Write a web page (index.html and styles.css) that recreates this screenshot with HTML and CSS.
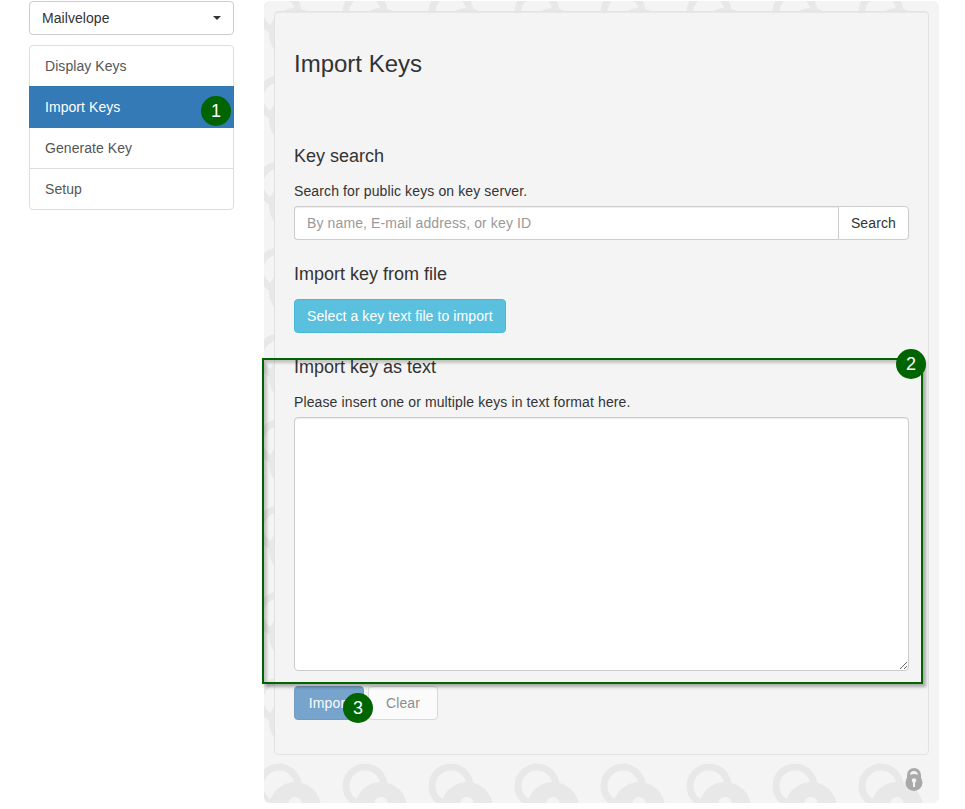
FILE: index.html

```html
<!DOCTYPE html>
<html lang="en">
<head>
    <meta charset="UTF-8">
    <meta name="viewport" content="width=device-width, initial-scale=1.0">
    <title>Import Keys</title>
    <link rel="stylesheet" href="styles.css">
</head>
<body>
    <div class="sidebar">
        <button class="keyring-select">
            <span>Mailvelope</span>
            <span class="caret"></span>
        </button>
        <div class="side-nav">
            <a class="side-item">Display Keys</a>
            <a class="side-item active">Import Keys</a>
            <a class="side-item">Generate Key</a>
            <a class="side-item">Setup</a>
        </div>
    </div>

    <div class="panel">
        <div class="well">
            <h2>Import Keys</h2>

            <h4 class="first">Key search</h4>
            <p>Search for public keys on key server.</p>
            <div class="input-group">
                <input type="text" placeholder="By name, E-mail address, or key ID">
                <button class="btn btn-search">Search</button>
            </div>

            <h4>Import key from file</h4>
            <button class="btn btn-info">Select a key text file to import</button>

            <h4>Import key as text</h4>
            <p>Please insert one or multiple keys in text format here.</p>
            <textarea></textarea>

            <div class="actions">
                <button class="btn btn-primary" disabled>Import</button>
                <button class="btn btn-clear" disabled>Clear</button>
            </div>
        </div>

        <svg class="panel-lock" viewBox="0 0 18 23" width="18" height="23">
            <path d="M3.5 11V7a5.5 5.5 0 0 1 11 0v4" fill="none" stroke="#a9a9a9" stroke-width="3"/>
            <circle cx="9" cy="14.5" r="8.5" fill="#a9a9a9"/>
            <circle cx="9" cy="12.5" r="2.2" fill="#f4f4f4"/>
            <rect x="8" y="13" width="2" height="6" fill="#f4f4f4"/>
        </svg>
    </div>

    <!-- callouts over the screenshot -->
    <div class="highlight"></div>
    <div class="callout callout-1">1</div>
    <div class="callout callout-2">2</div>
    <div class="callout callout-3">3</div>
</body>
</html>
```

FILE: styles.css

```css
body, html {
    margin: 0;
    padding: 0;
    background-color: #fff;
}
body {
    position: relative;
    display: flex;
    align-items: flex-start;
    gap: 30px;
    box-sizing: border-box;
    height: 809px;
    padding: 1px 0 0 29px;
    overflow: hidden;
    font-family: "Liberation Sans", Arial, sans-serif;
    font-size: 14px;
    line-height: 20px;
    color: #333;
}
.sidebar {
    width: 205px;
}
.keyring-select {
    display: flex;
    justify-content: space-between;
    align-items: center;
    box-sizing: border-box;
    width: 100%;
    height: 34px;
    padding: 6px 12px;
    font: inherit;
    letter-spacing: .06px;
    color: #333;
    background-color: #fff;
    border: 1px solid #ccc;
    border-radius: 4px;
}
.caret {
    width: 0;
    height: 0;
    border-top: 4px solid #333;
    border-left: 4px solid transparent;
    border-right: 4px solid transparent;
}
.side-nav {
    display: flex;
    flex-direction: column;
    margin-top: 10px;
}
.side-item {
    display: block;
    padding: 10px 15px;
    margin-bottom: -1px;
    letter-spacing: .06px;
    color: #555;
    background-color: #fff;
    border: 1px solid #ddd;
}
.side-item:first-child {
    border-radius: 4px 4px 0 0;
}
.side-item:last-child {
    margin-bottom: 0;
    border-radius: 0 0 4px 4px;
}
.side-item.active {
    position: relative;
    z-index: 1;
    color: #fff;
    background-color: #337ab7;
    border-color: #337ab7;
}
.panel {
    position: relative;
    box-sizing: border-box;
    width: 675px;
    height: 802px;
    padding: 10px;
    background-color: #f4f4f4;
    background-image: url("data:image/svg+xml,%3Csvg xmlns='http://www.w3.org/2000/svg' width='86' height='86'%3E%3Ccircle cx='23' cy='26' r='19' fill='none' stroke='%23e8e8e8' stroke-width='7'/%3E%3Ccircle cx='39' cy='48' r='26' fill='%23e8e8e8'/%3E%3Ccircle cx='39' cy='44' r='7' fill='%23f4f4f4'/%3E%3C/svg%3E");
    background-position: -8px 71px;
    border-radius: 6px;
}
.well {
    box-sizing: border-box;
    height: 744px;
    padding: 19px;
    background-color: #f4f4f4;
    border: 1px solid #e3e3e3;
    border-radius: 4px;
    box-shadow: inset 0 1px 1px rgba(0, 0, 0, .05);
}
h2 {
    margin: 20px 0 0;
    font-size: 24px;
    font-weight: 400;
    line-height: 26px;
}
h4 {
    margin: 24px 0 15px;
    font-size: 18px;
    font-weight: 400;
    line-height: 20px;
}
h4.first {
    margin-top: 69px;
}
p {
    margin: 0 0 5px;
    letter-spacing: .12px;
}
.input-group {
    display: flex;
}
input {
    flex: 1;
    box-sizing: border-box;
    min-width: 0;
    height: 34px;
    padding: 6px 12px;
    font: inherit;
    letter-spacing: .12px;
    color: #555;
    background-color: #fff;
    border: 1px solid #ccc;
    border-right: 0;
    border-radius: 4px 0 0 4px;
    box-shadow: inset 0 1px 1px rgba(0, 0, 0, .075);
}
input::placeholder {
    color: #999;
    opacity: 1;
}
.btn {
    box-sizing: border-box;
    height: 34px;
    padding: 6px 12px;
    font: inherit;
    letter-spacing: .12px;
    border: 1px solid transparent;
    border-radius: 4px;
}
.btn-search {
    color: #333;
    background-color: #fff;
    border-color: #ccc;
    border-radius: 0 4px 4px 0;
}
.btn-info {
    display: block;
    letter-spacing: .09px;
    color: #fff;
    background-color: #5bc0de;
    border-color: #46b8da;
}
.btn-primary {
    width: 70px;
    padding: 6px 0;
    color: #fff;
    background-color: #337ab7;
    border-color: #2e6da4;
    opacity: .65;
}
.btn-clear {
    width: 70px;
    padding: 6px 0;
    color: #555;
    background-color: #fff;
    border-color: #ccc;
    opacity: .65;
}
textarea {
    display: block;
    box-sizing: border-box;
    width: 100%;
    height: 254px;
    padding: 6px 12px;
    font: inherit;
    background-color: #fff;
    border: 1px solid #ccc;
    border-radius: 4px;
    box-shadow: inset 0 1px 1px rgba(0, 0, 0, .075);
}
.actions {
    display: flex;
    gap: 4px;
    margin-top: 15px;
}
.panel-lock {
    position: absolute;
    right: 16px;
    bottom: 12px;
}
.highlight {
    position: absolute;
    left: 262px;
    top: 358px;
    box-sizing: border-box;
    width: 661px;
    height: 326px;
    border: 2px solid #006400;
    box-shadow: 3px 3px 3px rgba(0, 0, 0, .3), inset 3px 3px 3px rgba(0, 0, 0, .2);
}
.callout {
    position: absolute;
    z-index: 2;
    width: 30px;
    height: 30px;
    font-size: 18px;
    line-height: 30px;
    text-align: center;
    color: #fff;
    background-color: #006400;
    border-radius: 50%;
}
.callout-1 {
    left: 201px;
    top: 96px;
}
.callout-2 {
    left: 896px;
    top: 349px;
}
.callout-3 {
    left: 343px;
    top: 693px;
}
```
